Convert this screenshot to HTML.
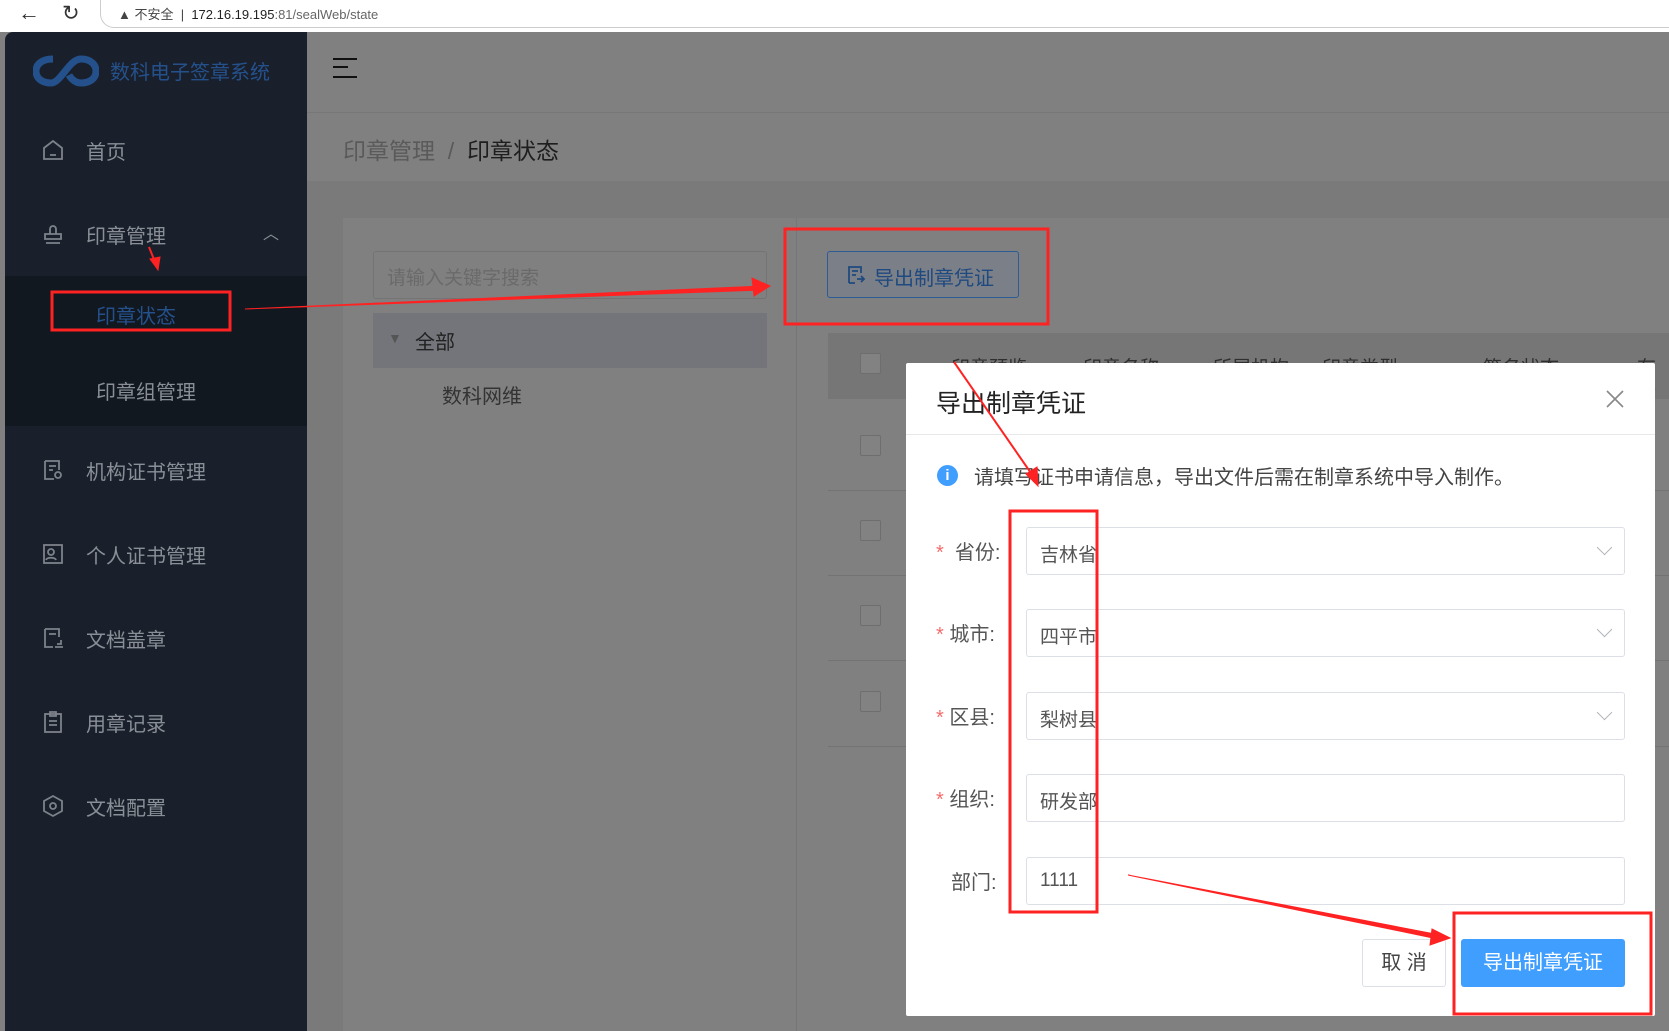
<!DOCTYPE html>
<html><head><meta charset="utf-8"><style>
*{margin:0;padding:0;box-sizing:border-box}
body{width:1669px;height:1031px;overflow:hidden;position:relative;background:#808080;font-family:"Liberation Sans","Noto Sans CJK SC",sans-serif}
.a{position:absolute}
.side{left:5px;top:32px;width:302px;height:999px;background:#1a202b;border-radius:8px 0 0 0}
.mi{position:absolute;left:0;width:302px;color:#8a8f97;font-size:20px}
.mi span{position:absolute;left:81px}
.mi svg{position:absolute;left:36px;top:2px}
.inp{position:absolute;left:1026px;width:599px;height:48px;border:1px solid #dcdfe6;border-radius:3px;font-size:19px;color:#555;padding:12px 0 0 13px}
.lab{position:absolute;font-size:20px;color:#555;}
.st{color:#f56c6c}
.chev{position:absolute;right:14px;top:14px;width:11px;height:11px;border-right:1.5px solid #b0b3b8;border-bottom:1.5px solid #b0b3b8;transform:rotate(45deg)}
.cb{position:absolute;left:860px;width:21px;height:21px;border:1px solid #6e6e6e;border-radius:2px;background:#828282}
.th{position:absolute;top:353px;font-size:19px;color:#2f2f2f}
.rl{position:absolute;left:828px;width:841px;height:1px;background:#737373}
</style></head><body>
<div class="a" style="left:0;top:0;width:1669px;height:32px;background:#fff"></div>
<div class="a" style="left:100px;top:0;width:1569px;height:28px;border:1px solid #ccc;border-top:none;border-right:none;border-radius:0 0 0 14px"></div>
<div class="a" style="left:18px;top:0;font-size:22px;color:#333">←</div>
<div class="a" style="left:62px;top:1px;font-size:21px;color:#333">↻</div>
<div class="a" style="left:118px;top:4px;font-size:13px;color:#444">▲ 不安全 &nbsp;|&nbsp; <span style="color:#222">172.16.19.195</span><span style="color:#666">:81/sealWeb/state</span></div>
<div class="a side"></div>
<svg class="a" style="left:33px;top:55px" width="66" height="32" viewBox="0 0 66 32"><path d="M20 4 C8 4 3 10 3 16 C3 24 10 28 18 28 C28 28 36 4 48 4 C58 4 63 10 63 16 C63 24 56 28 48 28 C40 28 36 20 36 20" fill="none" stroke="#24518c" stroke-width="7"/></svg>
<div class="a" style="left:110px;top:56px;font-size:20px;color:#24518c">数科电子签章系统</div>
<div class="mi" style="left:5px;top:136px"><svg width="24" height="24" fill="none" stroke="#7d828a" stroke-width="1.8"><path d="M3 21V10L12 3l9 7v11zM9 17h6"/></svg><span>首页</span></div>
<div class="mi" style="left:5px;top:220px"><svg width="24" height="24" fill="none" stroke="#7d828a" stroke-width="1.8"><path d="M9 12V7a3 3 0 016 0v5M4 12h16v5H4zM5 21h14"/></svg><span>印章管理</span><b style="position:absolute;left:258px;top:0;font-weight:normal;font-size:16px">︿</b></div>
<div class="a" style="left:5px;top:276px;width:302px;height:150px;background:#121820"></div>
<div class="a" style="left:96px;top:300px;font-size:20px;color:#24518c">印章状态</div>
<div class="a" style="left:96px;top:376px;font-size:20px;color:#8a8f97">印章组管理</div>
<div class="mi" style="left:5px;top:456px"><svg width="24" height="24" fill="none" stroke="#7d828a" stroke-width="1.8"><path d="M4 3h14v9M4 3v18h9M8 8h7M8 12h4"/><circle cx="17" cy="17" r="3"/></svg><span>机构证书管理</span></div>
<div class="mi" style="left:5px;top:540px"><svg width="24" height="24" fill="none" stroke="#7d828a" stroke-width="1.8"><rect x="3" y="3" width="18" height="18"/><circle cx="10" cy="10" r="3"/><path d="M5 18c1-3 9-3 10 0"/></svg><span>个人证书管理</span></div>
<div class="mi" style="left:5px;top:624px"><svg width="24" height="24" fill="none" stroke="#7d828a" stroke-width="1.8"><path d="M4 3h14v8M4 3v18h8M8 8h7"/><path d="M14 21h8M16 18h4v-4"/></svg><span>文档盖章</span></div>
<div class="mi" style="left:5px;top:708px"><svg width="24" height="24" fill="none" stroke="#7d828a" stroke-width="1.8"><rect x="4" y="4" width="16" height="18"/><path d="M9 2h6v4H9zM8 11h8M8 15h8"/></svg><span>用章记录</span></div>
<div class="mi" style="left:5px;top:792px"><svg width="24" height="24" fill="none" stroke="#7d828a" stroke-width="1.8"><path d="M12 2l9 5v10l-9 5-9-5V7z"/><circle cx="12" cy="12" r="3"/></svg><span>文档配置</span></div>
<div class="a" style="left:307px;top:112px;width:1362px;height:1px;background:#777"></div>
<div class="a" style="left:333px;top:58px;width:24px;height:20px;border-top:2.5px solid #111;border-bottom:2.5px solid #111"><div style="margin-top:6px;width:15px;border-top:2.5px solid #111"></div></div>
<div class="a" style="left:343px;top:132px;font-size:23px;color:#5a5a5a">印章管理 &nbsp;/ &nbsp;<span style="color:#1e1e1e">印章状态</span></div>
<div class="a" style="left:307px;top:181px;width:1362px;height:850px;background:#7a7a7a"></div>
<div class="a" style="left:343px;top:218px;width:1326px;height:813px;background:#808080"></div>
<div class="a" style="left:796px;top:218px;width:1px;height:813px;background:#767676"></div>
<div class="a" style="left:373px;top:251px;width:394px;height:48px;border:1px solid #747474;border-radius:3px;font-size:19px;color:#6a6a6a;padding:11px 13px">请输入关键字搜索</div>
<div class="a" style="left:373px;top:313px;width:394px;height:55px;background:#73757b"></div>
<div class="a" style="left:388px;top:330px;font-size:14px;color:#555">▼</div>
<div class="a" style="left:415px;top:326px;font-size:20px;color:#222">全部</div>
<div class="a" style="left:442px;top:380px;font-size:20px;color:#333">数科网维</div>
<div class="a" style="left:827px;top:251px;width:192px;height:47px;border:1px solid #2c5c96;border-radius:3px;background:#7b7f87;font-size:20px;color:#1f4a80;padding:10px 0 0 46px">导出制章凭证</div>
<svg class="a" style="left:846px;top:265px" width="20" height="20" fill="none" stroke="#1f4a80" stroke-width="1.8"><path d="M3 18V2h12v6M6 6h6M6 10h4M3 18h6M11 14h7M15 11l3 3-3 3"/></svg>
<div class="a" style="left:828px;top:333px;width:841px;height:66px;background:#767676"></div>
<div class="cb" style="top:353px"></div>
<div class="th" style="left:951px">印章预览</div><div class="th" style="left:1083px">印章名称</div><div class="th" style="left:1213px">所属机构</div><div class="th" style="left:1322px">印章类型</div><div class="th" style="left:1483px">签名状态</div><div class="th" style="left:1637px">有效</div>
<div class="rl" style="top:490px"></div><div class="rl" style="top:575px"></div><div class="rl" style="top:660px"></div><div class="rl" style="top:746px"></div>
<div class="cb" style="top:435px"></div><div class="cb" style="top:520px"></div><div class="cb" style="top:605px"></div><div class="cb" style="top:691px"></div>
<div class="a" style="left:906px;top:363px;width:749px;height:653px;background:#fff;border-radius:2px"></div>
<div class="a" style="left:936px;top:384px;font-size:25px;color:#222">导出制章凭证</div>
<svg class="a" style="left:1606px;top:390px" width="18" height="18" stroke="#888" stroke-width="1.6"><path d="M1 1L17 17M17 1L1 17"/></svg>
<div class="a" style="left:906px;top:434px;width:749px;height:1px;background:#e8e8e8"></div>
<div class="a" style="left:937px;top:465px;width:21px;height:21px;border-radius:50%;background:#409eff;color:#fff;font-size:15px;text-align:center;line-height:21px;font-weight:bold">i</div>
<div class="a" style="left:974px;top:461px;font-size:20px;color:#444">请填写证书申请信息，导出文件后需在制章系统中导入制作。</div>
<div class="lab" style="left:936px;top:536px"><span class="st">*</span>&nbsp; 省份:</div>
<div class="inp" style="top:527px">吉林省<div class="chev"></div></div>
<div class="lab" style="left:936px;top:618px"><span class="st">*</span> 城市:</div>
<div class="inp" style="top:609px">四平市<div class="chev"></div></div>
<div class="lab" style="left:936px;top:701px"><span class="st">*</span> 区县:</div>
<div class="inp" style="top:692px">梨树县<div class="chev"></div></div>
<div class="lab" style="left:936px;top:783px"><span class="st">*</span> 组织:</div>
<div class="inp" style="top:774px">研发部</div>
<div class="lab" style="left:951px;top:866px">部门:</div>
<div class="inp" style="top:857px">1111</div>
<div class="a" style="left:1362px;top:939px;width:84px;height:48px;border:1px solid #dcdfe6;border-radius:3px;font-size:20px;color:#444;text-align:center;line-height:46px">取 消</div>
<div class="a" style="left:1461px;top:939px;width:164px;height:48px;background:#409eff;border-radius:3px;font-size:20px;color:#fff;text-align:center;line-height:48px">导出制章凭证</div>
<svg class="a" style="left:0;top:0" width="1669" height="1031">
<g fill="none" stroke="#f22" stroke-width="3">
<rect x="52" y="292" width="178" height="38"/>
<rect x="785" y="229" width="263" height="95"/>
<rect x="1010" y="511" width="87" height="401"/>
<rect x="1454" y="913" width="197" height="101"/>
</g>
<g stroke="#f22" fill="#f22">
<path d="M245 309 L762 286 L762 290 Z"/>
<polygon points="770,286 752,278 754,296"/>
<path d="M149 247 L155 262" stroke-width="2"/><polygon points="158,270 150,259 160,257"/>
<path d="M954 362 L1033 476" stroke-width="2"/><polygon points="1038,486 1026,474 1037,467"/>
<path d="M1128 875 L1440 935 L1438 939 Z"/><polygon points="1450,938 1432,929 1430,945"/>
</g>
</svg>
</body></html>
